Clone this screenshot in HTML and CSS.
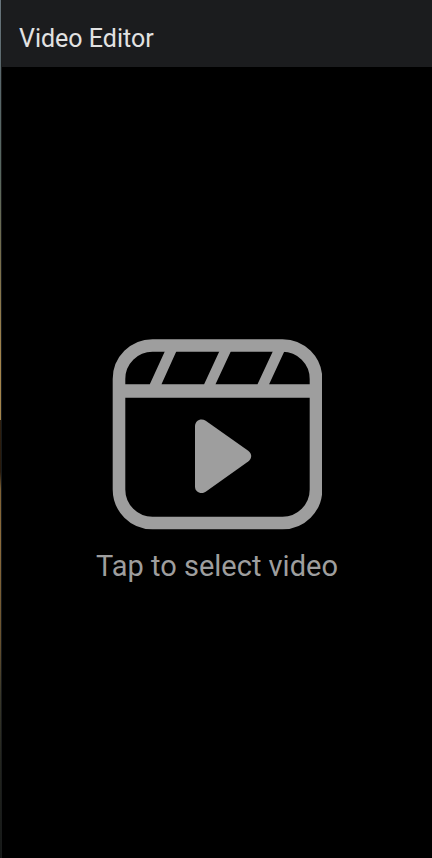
FILE: index.html
```
<!DOCTYPE html>
<html lang="en">
<head>
<meta charset="utf-8">
<meta name="viewport" content="width=device-width, initial-scale=1">
<title>Video Editor</title>
<link rel="stylesheet" href="styles.css">
</head>
<body>
<div class="edge"></div>
<div class="app">
  <header class="app-bar"><h1 class="title">Video Editor</h1></header>
  <main class="content">
    <button class="picker" type="button">
      <svg class="picker-icon" viewBox="112 339 210 191" aria-hidden="true">
        <rect x="119" y="345.5" width="197" height="177.5" rx="33.5" fill="none" stroke="currentColor" stroke-width="12.6"/>
        <path fill="currentColor" d="M120 384.3H315V397.7H120ZM165 351H176.5L160.7 386H149ZM219.5 351H231L214.700 386H203.300ZM273 351H284.500L268.300 386H256.700Z"/>
        <path fill="currentColor" d="M195 426C195 420.500 201 417.500 205.700 420.700L248.200 450.800C252.200 453.700 252.200 458.700 248.200 461.600L205.700 491.700C201 495 195 492 195 486.500Z"/>
      </svg>
      <span class="picker-label">Tap to select video</span>
    </button>
  </main>
</div>
</body>
</html>
```
FILE: styles.css
```
* {
  box-sizing: border-box;
}

body {
  margin: 0;
  min-height: 100vh;
  display: flex;
  background: #000;
  font-family: Roboto, "Liberation Sans", sans-serif;
}

.edge {
  width: 2px;
  border-right: 1px solid #191b1b;
  background: linear-gradient(#68747c 0%, #58666a 10%, #56665f 20%, #746c4c 30%, #a3844c 42%, #a3844c 49%, #30200f 49%, #281a0c 55%, #7d6034 57%, #8b6b3c 63%, #65502f 75%, #38372a 81%, #23251f 89%, #151817 100%);
}

.app {
  flex: 1;
  display: flex;
  flex-direction: column;
}

.app-bar {
  padding: 23px 17px 12px;
  background: #1b1c1e;
}

.title {
  margin: 0;
  color: #e2e2e2;
  font-size: 25px;
  font-weight: 400;
  line-height: 32px;
}

.content {
  flex: 1;
  display: flex;
  align-items: center;
  justify-content: center;
}

.picker {
  display: flex;
  flex-direction: column;
  align-items: center;
  gap: 16px;
  padding: 0;
  border: 0;
  background: none;
  color: #9e9e9e;
  font-family: inherit;
}

.picker-icon {
  width: 210px;
  height: 191px;
}

.picker-label {
  font-size: 29px;
  line-height: 40px;
}
```
